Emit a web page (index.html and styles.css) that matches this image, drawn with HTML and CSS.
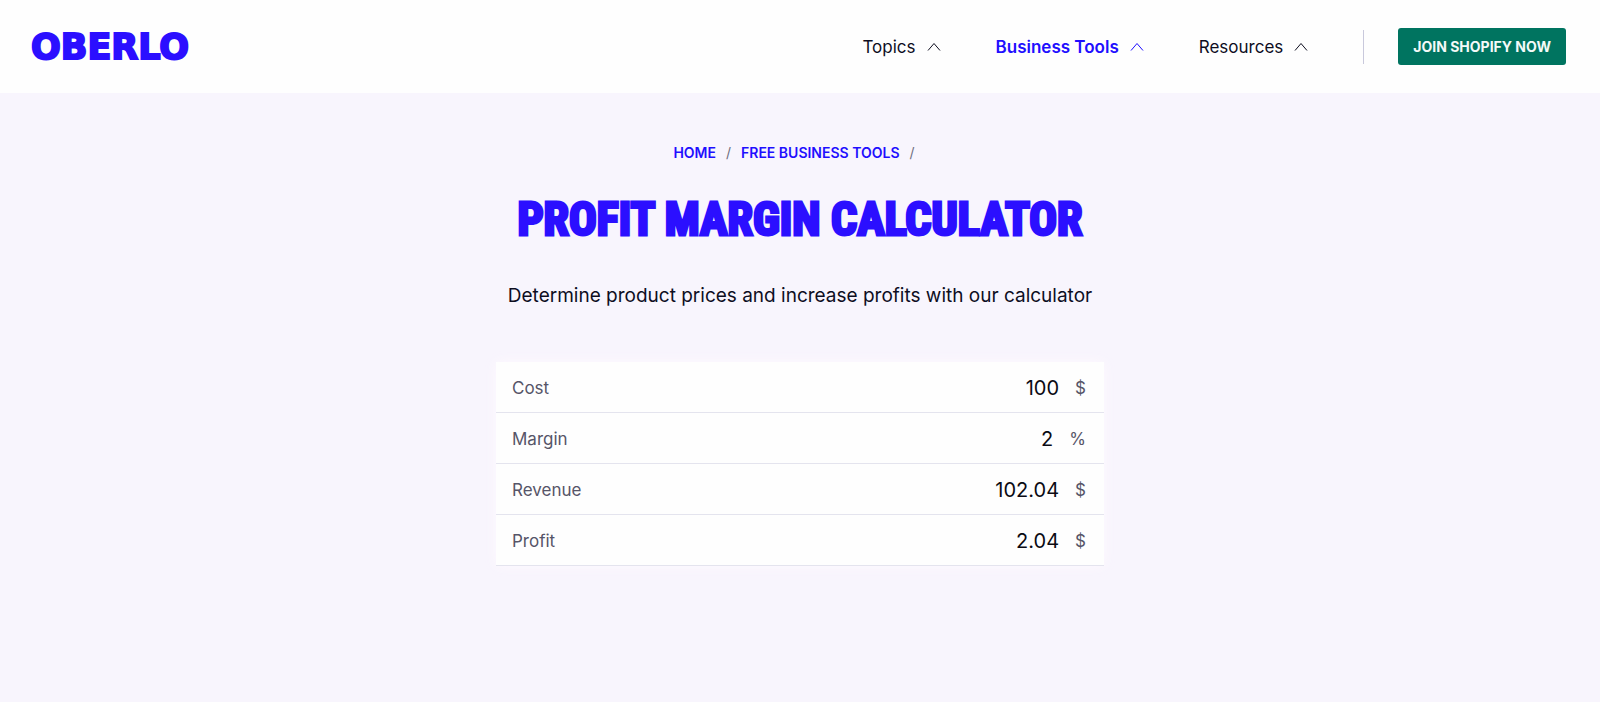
FILE: index.html
```html
<!DOCTYPE html>
<html lang="en">
<head>
    <meta charset="UTF-8">
    <meta name="viewport" content="width=device-width, initial-scale=1.0">
    <title>Profit Margin Calculator</title>
    <link rel="stylesheet" href="styles.css">
</head>
<body>
    <header class="header">
        <a class="logo" href="#">OBERLO</a>
        <nav class="nav">
            <a class="nav-link" href="#">Topics
                <svg class="chevron" viewBox="0 0 14 10"><path d="M1 8.500L7 1.500L13 8.500"/></svg>
            </a>
            <a class="nav-link active" href="#">Business Tools
                <svg class="chevron" viewBox="0 0 14 10"><path d="M1 8.500L7 1.500L13 8.500"/></svg>
            </a>
            <a class="nav-link" href="#">Resources
                <svg class="chevron" viewBox="0 0 14 10"><path d="M1 8.500L7 1.500L13 8.500"/></svg>
            </a>
        </nav>
        <div class="divider"></div>
        <button class="join-btn" type="button">JOIN SHOPIFY NOW</button>
    </header>
    <main class="main">
        <nav class="breadcrumb">
            <a href="#">HOME</a>
            <span>/</span>
            <a href="#">FREE BUSINESS TOOLS</a>
            <span>/</span>
        </nav>
        <h1 class="title">PROFIT MARGIN CALCULATOR</h1>
        <p class="subtitle">Determine product prices and increase profits with our calculator</p>
        <form class="calculator">
            <div class="row">
                <label for="cost">Cost</label>
                <input type="text" id="cost" value="100">
                <span class="unit">$</span>
            </div>
            <div class="row">
                <label for="margin">Margin</label>
                <input type="text" id="margin" value="2">
                <span class="unit">%</span>
            </div>
            <div class="row">
                <label for="revenue">Revenue</label>
                <input type="text" id="revenue" value="102.04">
                <span class="unit">$</span>
            </div>
            <div class="row">
                <label for="profit">Profit</label>
                <input type="text" id="profit" value="2.04">
                <span class="unit">$</span>
            </div>
        </form>
    </main>
</body>
</html>
```
FILE: styles.css
```css
* {
    box-sizing: border-box;
}
body {
    margin: 0;
    font-family: Inter, "Liberation Sans", sans-serif;
    color: #0e0e1f;
    background: #f8f5fd;
}
a {
    color: inherit;
    text-decoration: none;
}
.header {
    display: flex;
    align-items: center;
    height: 93px;
    padding: 0 34px 0 31px;
    background: #fefefe;
}
.logo {
    margin-right: auto;
    font-family: "DejaVu Sans", sans-serif;
    font-size: 35px;
    font-weight: bold;
    line-height: 40px;
    color: #2b0fff;
    -webkit-text-stroke: 2px #2b0fff;
}
.nav {
    display: flex;
    gap: 55px;
}
.nav-link {
    display: flex;
    align-items: center;
    gap: 11px;
    font-size: 17px;
    line-height: 24px;
}
.nav-link.active {
    font-weight: 600;
    color: #1f0fff;
}
.chevron {
    width: 14px;
    height: 10px;
    fill: none;
    stroke: currentColor;
}
.divider {
    width: 1px;
    height: 34px;
    margin: 0 34px 0 55px;
    background: #c9c9dc;
}
.join-btn {
    height: 37px;
    padding: 0 15px;
    border: 0;
    border-radius: 3px;
    font-family: inherit;
    font-size: 14px;
    font-weight: 700;
    color: #f4faf8;
    background: #007460;
}
.main {
    padding: 49px 16px;
    text-align: center;
}
.breadcrumb {
    display: flex;
    justify-content: center;
    gap: 10px;
    padding-right: 12px;
    font-size: 14px;
    font-weight: 600;
    line-height: 22px;
    color: #1f0fff;
}
.breadcrumb span {
    font-weight: 400;
    color: #6f6f80;
}
.title {
    margin: 22px 0 0;
    font-family: "Roboto Condensed", "Liberation Sans Narrow", sans-serif;
    font-size: 46px;
    font-weight: 700;
    line-height: 66px;
    color: #2b0fff;
    -webkit-text-stroke: 3px #2b0fff;
}
.subtitle {
    margin: 29px 0 0;
    font-size: 19px;
    line-height: 30px;
}
.calculator {
    max-width: 608px;
    margin: 51px auto 0;
    background: #fefefe;
    box-shadow: 0 0 12px rgba(255, 250, 255, 0.9);
}
.row {
    display: flex;
    align-items: center;
    height: 51px;
    padding: 2px 18px 0 16px;
    border-bottom: 1px solid #e4e4ee;
    color: #565568;
    font-size: 17px;
}
.row input {
    flex: 1;
    min-width: 0;
    padding: 0;
    margin-right: 16px;
    border: 0;
    outline: 0;
    background: none;
    font-family: inherit;
    font-size: 20px;
    text-align: right;
    color: #0b0b14;
}
```
